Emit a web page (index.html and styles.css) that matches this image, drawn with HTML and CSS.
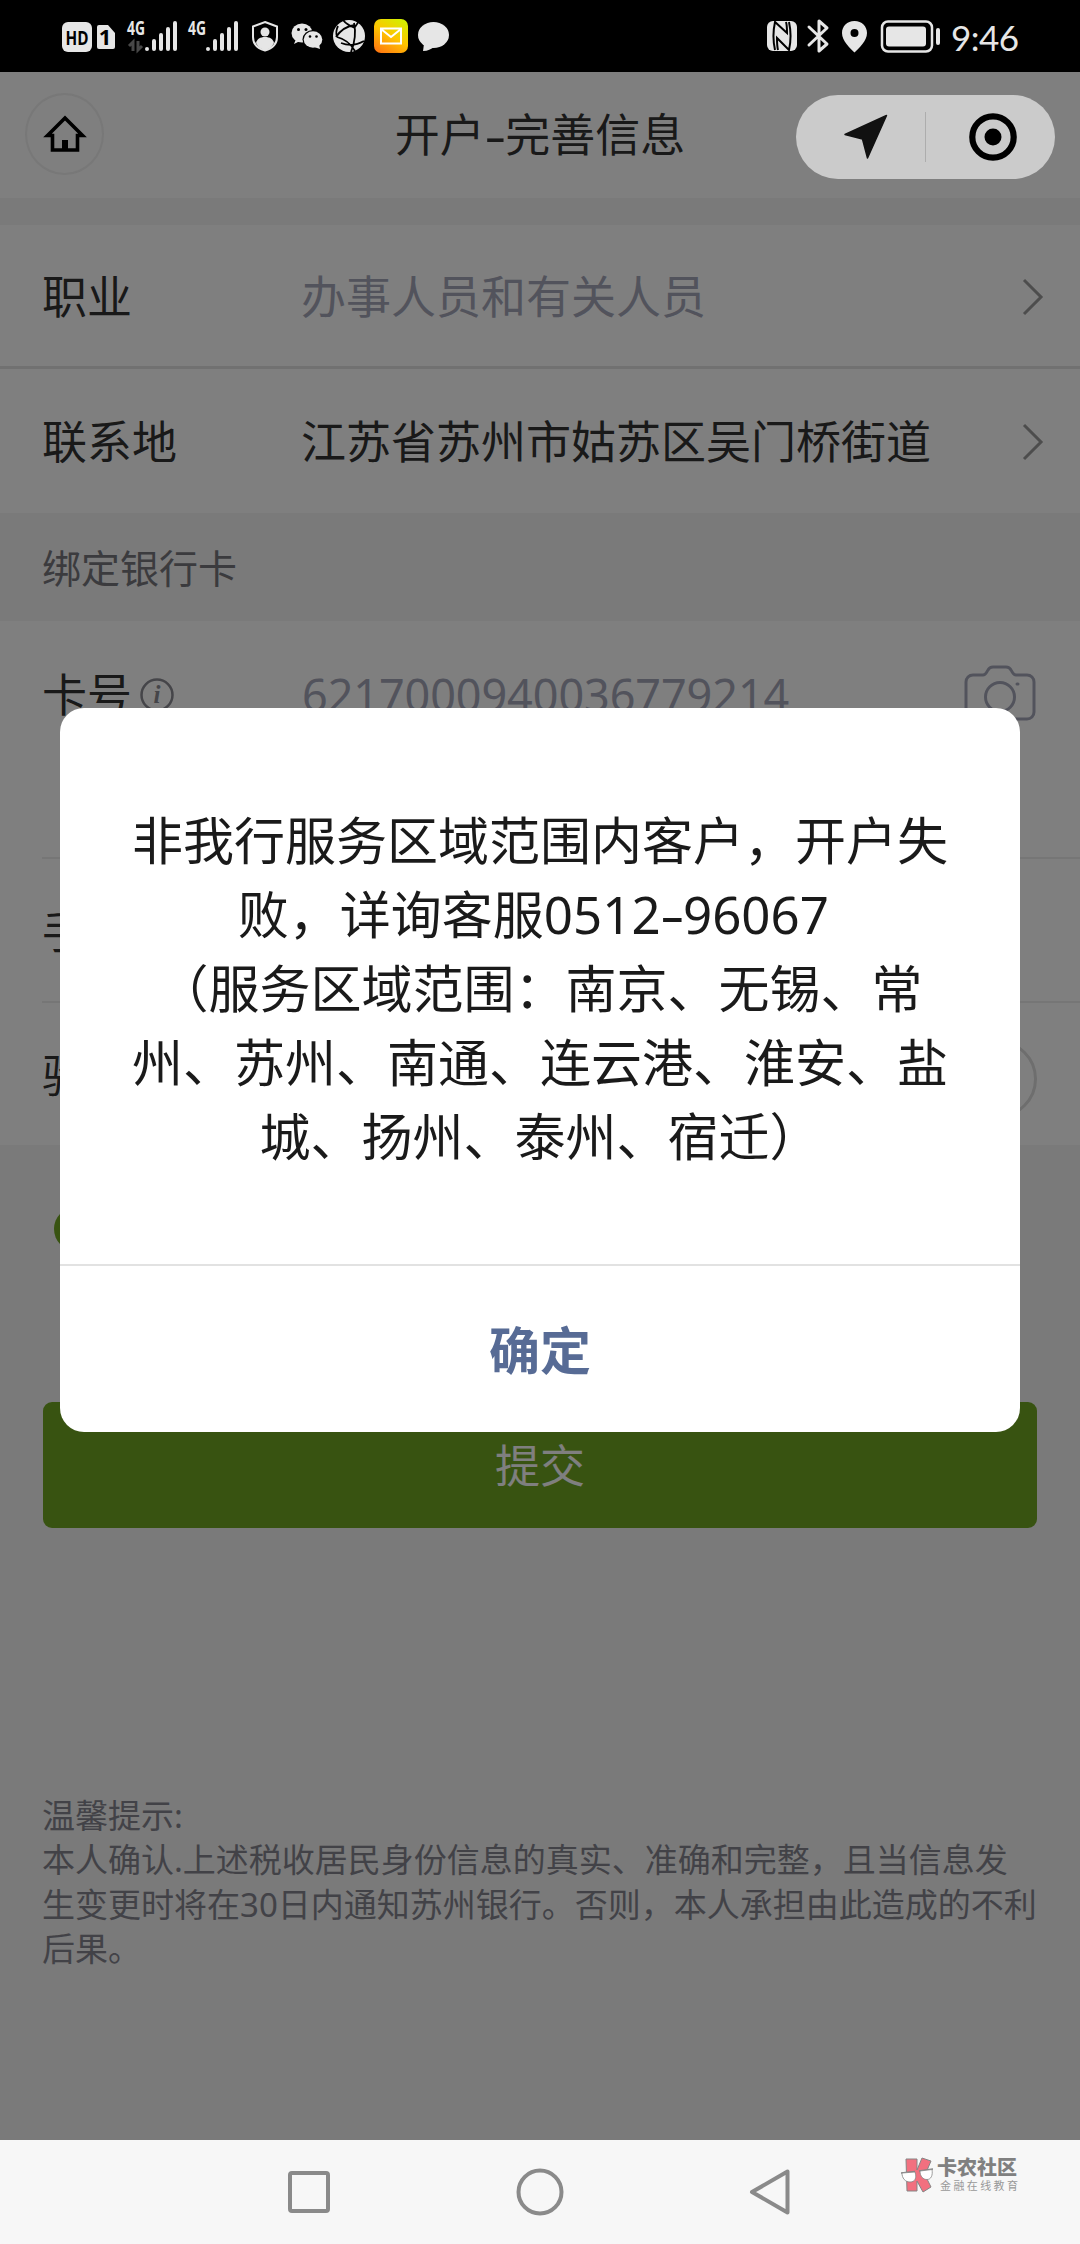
FILE: index.html
```html
<!DOCTYPE html>
<html lang="zh-CN">
<head>
  <meta charset="UTF-8" />
  <meta name="viewport" content="width=device-width, initial-scale=1.0"/>
  <title>开户-完善信息</title>
  <link rel="stylesheet" href="styles.css">
</head>
<body>

  <div class="status-bar">
    <div class="status-group">
      <!-- HD + SIM -->
      <svg width="53" height="72" viewBox="62 0 53 72">
        <rect x="62" y="22" width="30" height="30" rx="6" fill="#e6e6e6"/>
        <text x="77" y="44.500" class="hd-text" textLength="23" lengthAdjust="spacingAndGlyphs">HD</text>
        <path d="M99 25h9l7 8v14a2 2 0 0 1-2 2H99a2 2 0 0 1-2-2V27a2 2 0 0 1 2-2z" fill="#e6e6e6"/>
        <text x="105" y="45" class="sim-text">1</text>
      </svg>
      <svg width="53" height="72" viewBox="125 0 53 72">
        <text x="127" y="35" class="net-text" textLength="18" lengthAdjust="spacingAndGlyphs">4G</text>
        <path d="M133 51V42l-4 4M138 41v9l4-4" fill="none" stroke="#484848" stroke-width="3"/>
        <path d="M147 49v0M154 49V41M161 49V35M168 49V29M175 49V23" class="bars"/>
      </svg>
      <svg width="52" height="72" viewBox="188 0 52 72">
        <text x="188" y="35" class="net-text" textLength="18" lengthAdjust="spacingAndGlyphs">4G</text>
        <path d="M208 49v0M215 49V41M222 49V35M229 49V29M236 49V23" class="bars"/>
      </svg>
      <svg width="30" height="72" viewBox="250 0 30 72">
        <path d="M265 22l12 4.500V37c0 7-5 11.500-12 13.500C258 48.500 253 44 253 37V26.500z" fill="none" stroke="#e6e6e6" stroke-width="2"/>
        <circle cx="265" cy="32" r="4.500" fill="#e6e6e6"/>
        <path d="M256 43c1-4 4-6 9-6s8 2 9 6c-2 4-5 6-9 7.500-4-1.500-7-3.500-9-7.500z" fill="#e6e6e6"/>
      </svg>
      <!-- WeChat -->
      <svg width="33" height="72" viewBox="290 0 33 72">
        <ellipse cx="302" cy="33" rx="10.500" ry="9.500" fill="#e6e6e6"/>
        <path d="M296 39l-2 5 6-3z" fill="#e6e6e6"/>
        <ellipse cx="313" cy="39.500" rx="10.500" ry="9.500" fill="#000"/>
        <ellipse cx="313" cy="39.500" rx="9.300" ry="8.300" fill="#e6e6e6"/>
        <path d="M314 47l6 2-1-5z" fill="#e6e6e6"/>
        <circle cx="298.500" cy="29.500" r="1.500"/><circle cx="306" cy="29.500" r="1.500"/>
        <circle cx="310" cy="36.500" r="1.300"/><circle cx="316.500" cy="36.500" r="1.300"/>
      </svg>
      <svg width="31" height="72" viewBox="333 0 31 72">
        <circle cx="349" cy="36" r="16" fill="#e6e6e6"/>
        <path d="M343 20c3 4 7 6 12 8M336 37c4-6 11-11 19-12M338 26c-2 4-2 8-1 11M337 37c8 2 14 7 18 14M354 23c2 9 1 19-3 29M341 43c8 3 16 2 23-2M355 27l4-6" fill="none" stroke="#000" stroke-width="1.800"/>
      </svg>
      <svg width="34" height="72" viewBox="374 0 34 72">
        <defs>
          <linearGradient id="mail" x1="0.200" y1="1" x2="0.800" y2="0">
            <stop offset="0" stop-color="#ff7a10"/>
            <stop offset="0.500" stop-color="#ffc400"/>
            <stop offset="1" stop-color="#d2f000"/>
          </linearGradient>
        </defs>
        <rect x="374" y="19" width="34" height="34" rx="7" fill="url(#mail)"/>
        <path d="M381 28.500h20v15h-20zM381 29l10 8 10-8" fill="none" stroke="#fff" stroke-width="2"/>
      </svg>
      <svg width="32" height="72" viewBox="418 0 32 72">
        <ellipse cx="433.500" cy="35" rx="15.500" ry="13" fill="#e6e6e6"/>
        <path d="M424 44l-1 7c5 0 8-2 11-4z" fill="#e6e6e6"/>
      </svg>
    </div>

    <div class="status-group">
      <!-- NFC -->
      <svg width="30" height="72" viewBox="767 0 30 72">
        <rect x="767" y="21" width="30" height="30" rx="6" fill="#e6e6e6"/>
        <path d="M775 50c-2-9-2-19 0-28l12 11c0-5 0-8-1-11M789 22c2 9 2 19 0 28L777 38c0 5 0 8 1 12" fill="none" stroke="#000" stroke-width="2"/>
      </svg>
      <svg width="22" height="72" viewBox="807 0 22 72">
        <path d="M809 27l18 17-8 7V21l8 7-18 17" fill="none" stroke="#e6e6e6" stroke-width="3" stroke-linejoin="round" stroke-linecap="round"/>
      </svg>
      <svg width="32" height="72" viewBox="839 0 32 72">
        <path fill-rule="evenodd" d="M854.500 21c7.500 0 12.500 5.500 12.500 12 0 8-8 15-12.500 19.500C850 48 842 41 842 33c0-6.500 5-12 12.500-12zm0 8a4 4 0 1 0 0 8 4 4 0 0 0 0-8z" fill="#e6e6e6"/>
      </svg>
      <svg width="60" height="72" viewBox="881 0 60 72">
        <rect x="882" y="21.500" width="50" height="30" rx="6" fill="none" stroke="#e6e6e6" stroke-width="2.500"/>
        <rect x="886" y="26.500" width="40" height="20" rx="3" fill="#e6e6e6"/>
        <rect x="936" y="28" width="4" height="17" rx="2" fill="#e6e6e6"/>
      </svg>
      <span class="clock">9:46</span>
    </div>
  </div>

  <div class="page">
    <div class="title-bar">
      <h1>开户<span class="dash">-</span>完善信息</h1>
    </div>

    <div class="cell-group cell-group-top">
      <div class="cell">
        <div class="label">职业</div>
        <div class="value muted">办事人员和有关人员</div>
        <svg class="chevron" width="22" height="38" viewBox="0 0 22 38"><path d="M2 2l17 17L2 36"/></svg>
      </div>
      <div class="cell">
        <div class="label">联系地</div>
        <div class="value">江苏省苏州市姑苏区吴门桥街道</div>
        <svg class="chevron" width="22" height="38" viewBox="0 0 22 38"><path d="M2 2l17 17L2 36"/></svg>
      </div>
    </div>

    <div class="section-title">绑定银行卡</div>

    <div class="cell-group">
      <div class="card-cell">
        <div class="label">
          卡号
          <svg class="info" width="34" height="34" viewBox="0 0 34 34">
            <circle cx="17" cy="17" r="15.500"/>
            <text x="17" y="25">i</text>
          </svg>
        </div>
        <div class="value card-no muted">6217000940036779214</div>
        <svg class="camera" width="70" height="56" viewBox="0 0 70 56">
          <path d="M8 10h10c3 0 3-2 5-5 1-2 2-3 5-3h13c3 0 4 1 5 3 2 3 2 5 5 5h11c4 0 7 3 7 7v30c0 4-3 7-7 7H8c-4 0-7-3-7-7V17c0-4 3-7 7-7z"/>
          <circle cx="35" cy="32" r="14.500"/>
          <path d="M52 19h1"/>
        </svg>
      </div>
      <div class="form-cell">
        <div class="label">手机号</div>
      </div>
      <div class="form-cell">
        <div class="label">验证码</div>
        <button class="code-btn"></button>
      </div>
    </div>

    <div class="agree"><span class="check"></span></div>

    <button class="submit">提交</button>

    <div class="tips">
      <p>温馨提示:</p>
      <p>本人确认.上述税收居民身份信息的真实、准确和完整，且当信息发<br>生变更时将在30日内通知苏州银行。否则，本人承担由此造成的不利<br>后果。</p>
    </div>
  </div>

  <div class="mask"></div>

  <div class="home-btn">
    <svg width="40" height="38" viewBox="0 0 40 38">
      <path d="M2.500 20.500L20 3l17.500 17.500h-5V35h-25V20.500z" fill="none" stroke="#000" stroke-width="3.600"/>
      <path d="M17 25h6v10h-6z"/>
    </svg>
  </div>

  <div class="capsule">
    <div class="capsule-item">
      <svg width="44" height="46" viewBox="0 0 44 46">
        <path d="M42.500 1.500L23.500 44 18.500 25 1 20.500z" fill="#111" stroke="#111" stroke-width="1.500" stroke-linejoin="round"/>
      </svg>
    </div>
    <div class="capsule-line"></div>
    <div class="capsule-item">
      <svg width="48" height="48" viewBox="0 0 48 48">
        <circle cx="24" cy="24" r="20.700" fill="none" stroke="#000" stroke-width="6.200"/>
        <circle cx="24" cy="24" r="8.500"/>
      </svg>
    </div>
  </div>

  <div class="dialog">
    <div class="dialog-body">
      非我行服务区域范围内客户，开户失<br>败，详询客服0512<span class="dash">-</span>96067&nbsp;<br>（服务区域范围：南京、无锡、常<br>州、苏州、南通、连云港、淮安、盐<br>城、扬州、泰州、宿迁）
    </div>
    <div class="dialog-btn">确定</div>
  </div>

  <div class="nav-bar">
    <svg width="44" height="48" viewBox="0 0 44 48"><rect x="3" y="5" width="38" height="38" rx="2"/></svg>
    <svg width="48" height="48" viewBox="0 0 48 48"><circle cx="24" cy="24" r="21.500"/></svg>
    <svg width="44" height="48" viewBox="0 0 44 48"><path d="M38.500 3.500v41L3 24z"/></svg>
  </div>

  <div class="watermark">
    <svg width="36" height="38" viewBox="0 0 36 38">
      <path d="M6 3h11v11l5-12 9 3-6 14 6 12-8 5-6-11v10H7z" fill="#f2707f" stroke="#858585" stroke-width="1"/>
      <path d="M1 17l14-1.500M19 15l14-2" fill="none" stroke="#858585" stroke-width="1.500"/>
      <path d="M2 17l13-1c2 6 0 10-5 10s-8-4-8-9z" fill="#fff" stroke="#858585" stroke-width="0.800"/>
      <path d="M20 15l12-1.500c1 6-1 10-5 10s-7-3-7-8.500z" fill="#fff" stroke="#858585" stroke-width="0.800"/>
    </svg>
    <div>
      <div class="wm-name">卡农社区</div>
      <div class="wm-sub">金融在线教育</div>
    </div>
  </div>

</body>
</html>
```

FILE: styles.css
```css
* {
  box-sizing: border-box;
}

body {
  position: relative;
  width: 1080px;
  height: 2244px;
  margin: 0;
  overflow: hidden;
  font-family: 'Noto Sans', 'Noto Sans CJK SC', sans-serif;
  color: #333;
  background: #f4f4f4;
}

h1, p {
  margin: 0;
  font-weight: 400;
}

svg {
  display: block;
  overflow: visible;
  flex-shrink: 0;
}

button {
  font-family: inherit;
  border: none;
}

.dash {
  display: inline-block;
  margin: 0 3px;
  transform: scaleX(1.5);
}

/* status bar */
.status-bar {
  height: 72px;
  padding: 0 62px;
  display: flex;
  justify-content: space-between;
  background: #000;
}

.status-group {
  display: flex;
  gap: 10px;
}

.hd-text {
  font: 700 20px 'Open Sans', sans-serif;
  text-anchor: middle;
}

.sim-text {
  font: 700 22px 'Open Sans', sans-serif;
  text-anchor: middle;
}

.net-text {
  font: 700 19px 'Open Sans', sans-serif;
  fill: #e6e6e6;
}

.bars {
  fill: none;
  stroke: #e6e6e6;
  stroke-width: 4;
  stroke-linecap: round;
}

.clock {
  width: 67px;
  font-family: Lato, sans-serif;
  font-size: 35px;
  line-height: 75px;
  letter-spacing: -0.5px;
  color: #e6e6e6;
  white-space: nowrap;
}

/* page */
.page {
  height: 2068px;
}

.title-bar {
  height: 126px;
  display: flex;
  justify-content: center;
  background: #fff;
}

.title-bar h1 {
  font-size: 45px;
  line-height: 125px;
}

.cell-group {
  background: #fff;
}

.cell-group-top {
  margin-top: 27px;
}

.cell {
  display: flex;
  align-items: center;
  height: 144px;
  padding: 2px 36px 0 42px;
}

.cell:first-child {
  border-bottom: 3px solid #e2e2e2;
}

.label {
  display: flex;
  align-items: center;
  width: 259px;
  font-size: 45px;
  line-height: 60px;
}

.value {
  flex: 1;
  font-size: 45px;
  line-height: 60px;
  white-space: nowrap;
}

.muted {
  color: #a5a7b9;
}

.card-no {
  padding-left: 1px;
  letter-spacing: -0.1px;
}

.chevron {
  fill: none;
  stroke: #9a9a9a;
  stroke-width: 3;
}

.section-title {
  height: 108px;
  padding-left: 42px;
  font-size: 39px;
  line-height: 110px;
  color: #77777d;
}

.card-cell {
  display: flex;
  align-items: flex-start;
  height: 236px;
  padding: 44px 45px 0 42px;
}

.info {
  margin-left: 8px;
}

.info circle {
  fill: none;
  stroke: #8a8a92;
  stroke-width: 2.500;
}

.info text {
  font: italic 700 25px 'Liberation Serif', serif;
  fill: #8a8a92;
  text-anchor: middle;
}

.camera {
  fill: none;
  stroke: #a5a7b9;
  stroke-width: 3;
  stroke-linecap: round;
}

.form-cell {
  display: flex;
  align-items: center;
  justify-content: space-between;
  height: 144px;
  margin-left: 42px;
  padding: 3px 43px 0 0;
  border-top: 2px solid #ececec;
}

.code-btn {
  width: 240px;
  height: 78px;
  margin-top: 7px;
  border: 3px solid #dcdcdc;
  border-radius: 39px;
  background: #fff;
}

.agree {
  height: 257px;
  padding: 62px 54px 0;
}

.check {
  display: block;
  width: 44px;
  height: 44px;
  border-radius: 50%;
  background: #70a622;
}

.submit {
  display: block;
  width: 994px;
  height: 126px;
  margin: 0 auto;
  padding: 0 0 4px;
  border-radius: 9px;
  font-size: 45px;
  color: #fff;
  background: #70a622;
}

.tips {
  margin-top: 266px;
  padding-left: 42px;
  font-size: 33px;
  line-height: 44.300px;
  color: #85858f;
  white-space: nowrap;
}

.mask {
  position: absolute;
  top: 72px;
  left: 0;
  width: 1080px;
  height: 2068px;
  background: rgba(0, 0, 0, 0.5);
}

/* floating buttons of the mini program */
.home-btn {
  position: absolute;
  top: 93px;
  left: 25px;
  display: flex;
  align-items: center;
  justify-content: center;
  width: 79px;
  height: 82px;
  border: 2px solid #787878;
  border-radius: 50%;
}

.capsule {
  position: absolute;
  top: 95px;
  left: 796px;
  display: flex;
  align-items: center;
  width: 259px;
  height: 84px;
  border-radius: 42px;
  background: #cbcbcb;
}

.capsule-item {
  flex: 1;
  display: flex;
  justify-content: center;
}

.capsule-item:last-child {
  padding-left: 4px;
}

.capsule-item:first-child {
  padding-left: 7px;
}

.capsule-line {
  width: 1px;
  height: 50px;
  margin-left: -3px;
  background: #adadad;
}

/* dialog */
.dialog {
  position: absolute;
  top: 708px;
  left: 60px;
  width: 960px;
  height: 724px;
  border-radius: 24px;
  background: #fff;
  overflow: hidden;
}

.dialog-body {
  height: 556px;
  padding-top: 95px;
  font-size: 51px;
  line-height: 74px;
  text-align: center;
  color: #1a1a1a;
  white-space: nowrap;
}

.dialog-btn {
  height: 168px;
  border-top: 2px solid #e2e2e2;
  font-size: 51px;
  font-weight: 700;
  line-height: 169px;
  text-align: center;
  color: #576b95;
}

/* system navigation */
.nav-bar {
  display: flex;
  align-items: center;
  gap: 185px;
  height: 104px;
  padding-left: 287px;
  background: #f7f7f7;
}

.nav-bar svg {
  fill: none;
  stroke: #8a8a8a;
  stroke-width: 4;
  stroke-linejoin: round;
}

.watermark {
  position: absolute;
  top: 2156px;
  left: 900px;
  display: flex;
  gap: 1px;
}

.wm-name {
  font-size: 20px;
  font-weight: 900;
  line-height: 24px;
  color: #808080;
}

.wm-sub {
  padding-left: 3px;
  font-size: 11px;
  line-height: 12px;
  letter-spacing: 2.400px;
  color: #999;
}
```
